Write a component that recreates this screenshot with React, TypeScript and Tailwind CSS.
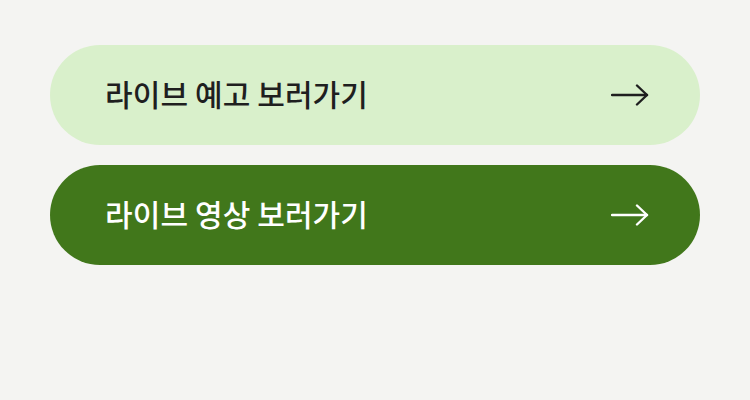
import React from "react";

function Arrow({ color }: { color: string }) {
  return (
    <svg width="38" height="22" viewBox="0 0 38 22" fill="none">
      <path d="M1 11H36" stroke={color} strokeWidth="2.4" strokeLinecap="round" />
      <path d="M26 1.5L36 11L26 20.5" stroke={color} strokeWidth="2.4" strokeLinecap="round" strokeLinejoin="round" />
    </svg>
  );
}

export default function App() {
  return (
    <div className="w-[750px] h-[400px] bg-[#f4f4f2] pt-[45px] px-[50px] flex flex-col gap-[20px]" style={{ fontFamily: '"Noto Sans CJK KR", "Noto Sans", sans-serif' }}>
      <div className="h-[100px] rounded-full bg-[#d9f0cb] flex items-center justify-between pl-[55px] pr-[51px]">
        <span className="text-[30px] leading-none font-medium text-[#1f1f1f] tracking-[0.1px] pb-[5px]">라이브 예고 보러가기</span>
        <Arrow color="#1f1f1f" />
      </div>
      <div className="h-[100px] rounded-full bg-[#41771b] flex items-center justify-between pl-[55px] pr-[51px]">
        <span className="text-[30px] leading-none font-medium text-white tracking-[0.1px] pb-[5px]">라이브 영상 보러가기</span>
        <Arrow color="#ffffff" />
      </div>
    </div>
  );
}
